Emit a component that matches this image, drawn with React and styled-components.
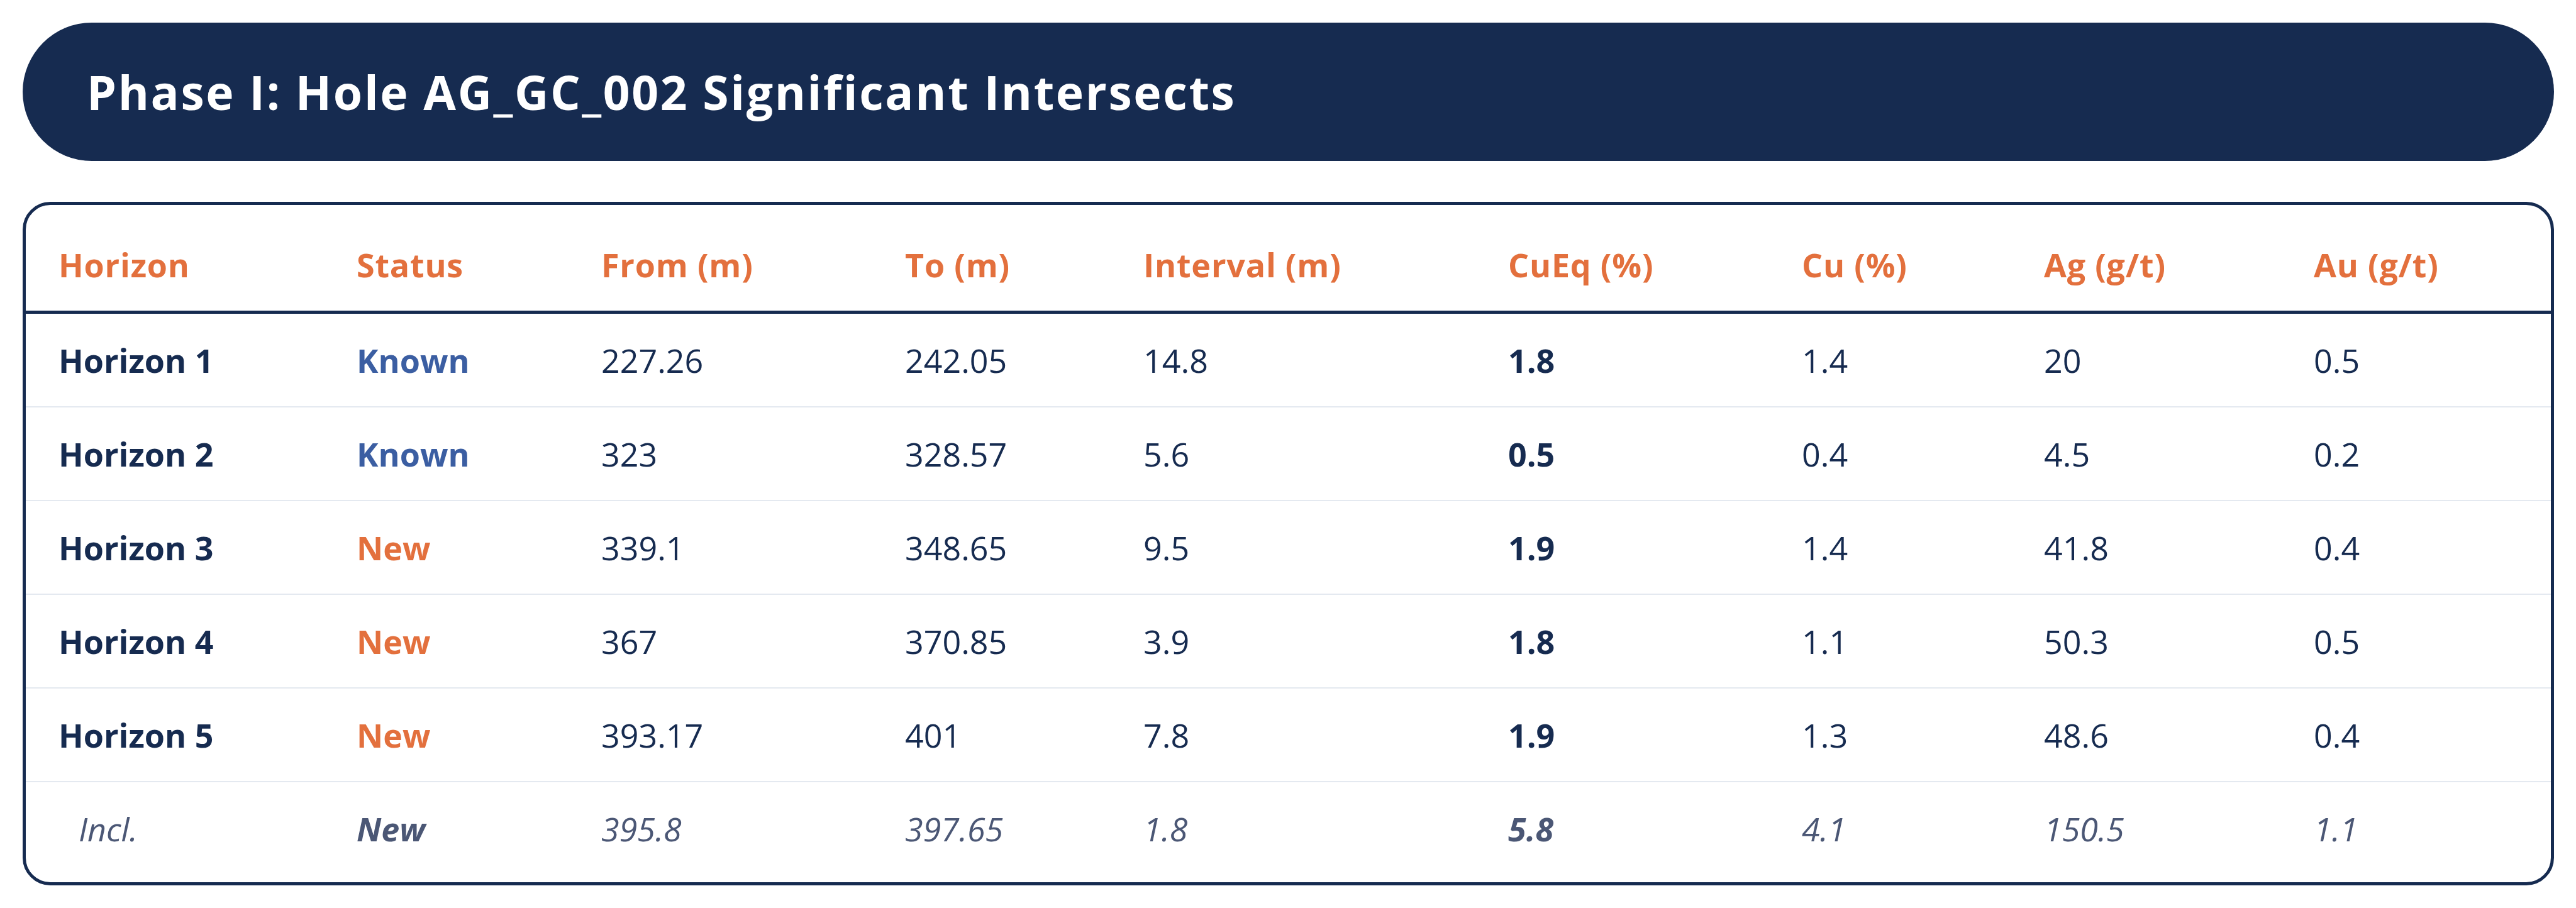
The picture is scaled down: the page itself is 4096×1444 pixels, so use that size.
import React from 'react';
import styled, { createGlobalStyle } from 'styled-components';

const navy = '#162b50';
const orange = '#e3703d';

const GlobalStyle = createGlobalStyle`
  html, body {
    margin: 0;
    padding: 0;
    background: #ffffff;
  }
  body {
    font-family: 'Open Sans', 'Liberation Sans', sans-serif;
    color: ${navy};
  }
`;

const Page = styled.div`
  display: flex;
  flex-direction: column;
  gap: 65px;
  padding: 36px 35px 36px 36px;
  width: 4096px;
  box-sizing: border-box;
`;

const TitleBar = styled.div`
  height: 220px;
  border-radius: 110px;
  background: ${navy};
  display: flex;
  align-items: center;
  padding-left: 102px;
`;

const Title = styled.h1`
  margin: 0;
  color: #ffffff;
  font-size: 75px;
  font-weight: 700;
  letter-spacing: 2.6px;
`;

const Card = styled.div`
  border: 5px solid ${navy};
  border-radius: 44px;
  padding: 12px 0;
  overflow: hidden;
`;

const columns = '474px 389px 483px 379px 580px 467px 385px 429px 1fr';

const HeadRow = styled.div`
  display: grid;
  grid-template-columns: ${columns};
  height: 161px;
  box-sizing: border-box;
  border-bottom: 5px solid ${navy};
  align-items: center;
`;

const HeadCell = styled.div`
  padding-left: 52px;
  padding-top: 8px;
  font-size: 52px;
  font-weight: 700;
  letter-spacing: 0.8px;
  color: ${orange};
  white-space: nowrap;
`;

const Row = styled.div`
  display: grid;
  grid-template-columns: ${columns};
  box-sizing: border-box;
  align-items: center;
  border-bottom: ${(p) => (p.$last ? 'none' : '2px solid #e4e9f0')};
  height: ${(p) => (p.$last ? '147px' : '149px')};
  color: ${(p) => (p.$muted ? '#4b5775' : navy)};
  font-style: ${(p) => (p.$muted ? 'italic' : 'normal')};
`;

const Cell = styled.div`
  padding-left: ${(p) => (p.$indent ? '84px' : '52px')};
  font-size: 52px;
  font-weight: ${(p) => (p.$bold ? 700 : 400)};
  color: ${(p) => p.$color || 'inherit'};
  white-space: nowrap;
`;

const heads = ['Horizon', 'Status', 'From (m)', 'To (m)', 'Interval (m)', 'CuEq (%)', 'Cu (%)', 'Ag (g/t)', 'Au (g/t)'];

const rows = [
  { name: 'Horizon 1', status: 'Known', vals: ['227.26', '242.05', '14.8', '1.8', '1.4', '20', '0.5'] },
  { name: 'Horizon 2', status: 'Known', vals: ['323', '328.57', '5.6', '0.5', '0.4', '4.5', '0.2'] },
  { name: 'Horizon 3', status: 'New', vals: ['339.1', '348.65', '9.5', '1.9', '1.4', '41.8', '0.4'] },
  { name: 'Horizon 4', status: 'New', vals: ['367', '370.85', '3.9', '1.8', '1.1', '50.3', '0.5'] },
  { name: 'Horizon 5', status: 'New', vals: ['393.17', '401', '7.8', '1.9', '1.3', '48.6', '0.4'] },
];

const statusColor = (s) => (s === 'Known' ? '#3b5ea2' : orange);

const App = () => {
  return (
    <>
      <GlobalStyle />
      <Page>
        <TitleBar>
          <Title>Phase I: Hole AG_GC_002 Significant Intersects</Title>
        </TitleBar>
        <Card>
          <HeadRow>
            {heads.map((h) => (
              <HeadCell key={h}>{h}</HeadCell>
            ))}
          </HeadRow>
          {rows.map((r) => (
            <Row key={r.name}>
              <Cell $bold>{r.name}</Cell>
              <Cell $bold $color={statusColor(r.status)}>{r.status}</Cell>
              {r.vals.map((v, i) => (
                <Cell key={i} $bold={i === 3}>{v}</Cell>
              ))}
            </Row>
          ))}
          <Row $last $muted>
            <Cell $indent>Incl.</Cell>
            <Cell $bold>New</Cell>
            <Cell>395.8</Cell>
            <Cell>397.65</Cell>
            <Cell>1.8</Cell>
            <Cell $bold>5.8</Cell>
            <Cell>4.1</Cell>
            <Cell>150.5</Cell>
            <Cell>1.1</Cell>
          </Row>
        </Card>
      </Page>
    </>
  );
};

export default App;
